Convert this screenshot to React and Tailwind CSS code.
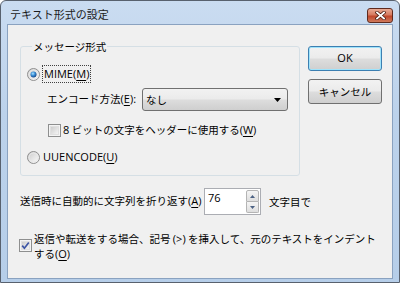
import React from 'react';

// Latin text uses a wider face than the CJK glyphs
const L = ({ children, u }) => (
  <span className={"font-['Open_Sans',sans-serif] text-[11px]" + (u ? ' underline underline-offset-2' : '')}>
    {children}
  </span>
);

const Key = ({ k }) => (
  <L>
    (<span className="underline underline-offset-2">{k}</span>)
  </L>
);

function Radio({ checked }) {
  return (
    <svg width="13" height="13" viewBox="0 0 13 13" className="shrink-0">
      <defs>
        <linearGradient id={checked ? 'rbg1' : 'rbg0'} x1="0" y1="0" x2="1" y2="1">
          <stop offset="0" stopColor="#c9c9c9" />
          <stop offset="1" stopColor="#ffffff" />
        </linearGradient>
        <radialGradient id="rdot" cx="40%" cy="35%" r="65%">
          <stop offset="0" stopColor="#a9e2ff" />
          <stop offset="0.5" stopColor="#3b8fd6" />
          <stop offset="1" stopColor="#16478a" />
        </radialGradient>
      </defs>
      <circle cx="6.5" cy="6.5" r="6" fill={`url(#${checked ? 'rbg1' : 'rbg0'})`} stroke="#8f8f8f" />
      <circle cx="6.5" cy="6.5" r="4.5" fill="none" stroke="#e9e9e9" />
      {checked && <circle cx="6.5" cy="6.5" r="3" fill="url(#rdot)" />}
    </svg>
  );
}

function Check({ checked }) {
  return (
    <svg width="13" height="13" viewBox="0 0 13 13" className="shrink-0">
      <defs>
        <linearGradient id="cbg" x1="0" y1="0" x2="1" y2="1">
          <stop offset="0" stopColor="#cbcbcb" />
          <stop offset="1" stopColor="#f6f6f6" />
        </linearGradient>
      </defs>
      <rect x="0.5" y="0.5" width="12" height="12" fill="#f4f4f4" stroke="#8e8f8f" />
      <rect x="2.5" y="2.5" width="8" height="8" fill="url(#cbg)" stroke="#e0e0e0" />
      {checked && (
        <path d="M3.2 6.6 L5.4 9.2 L9.8 3.4" fill="none" stroke="#3d55a5" strokeWidth="1.7" />
      )}
    </svg>
  );
}

const btn =
  "w-[74px] h-[25px] rounded-[3px] flex items-center justify-center text-[10.5px] text-black bg-[linear-gradient(180deg,#f2f2f2_0%,#ebebeb_48%,#dddddd_52%,#cfcfcf_100%)]";

export default function App() {
  return (
    <div className="w-[400px] h-[283px] flex flex-col overflow-hidden rounded-t-[6px] border border-[#58616e] bg-[linear-gradient(180deg,#cadcf1_0%,#bcd2eb_40%,#b6cee9_100%)] font-['Noto_Sans_CJK_JP',sans-serif] text-[10.5px] text-black">
      {/* Title bar */}
      <div className="h-[23px] flex items-center justify-between pl-[9px] pr-[6px]">
        <span className="mt-[4px] text-[11px] text-[#1b1b1b]">テキスト形式の設定</span>
        <div className="mt-[6px] w-[26px] h-[15px] rounded-[3px] border border-[#5f2a1e] bg-[linear-gradient(180deg,#e9ab95_0%,#d67a5f_45%,#c0462a_55%,#cf7a5c_100%)] flex items-center justify-center">
          <svg width="11" height="9" viewBox="0 0 11 9">
            <path d="M2 1.5 L9 7.5 M9 1.5 L2 7.5" stroke="#4b1d12" strokeWidth="3.4" strokeLinecap="square" />
            <path d="M2 1.5 L9 7.5 M9 1.5 L2 7.5" stroke="#ffffff" strokeWidth="1.8" strokeLinecap="square" />
          </svg>
        </div>
      </div>

      {/* Client area */}
      <div className="flex-1 mx-[6px] mb-[3px] border border-[#8aa2c0] bg-[#f0f0f0] flex flex-col">
        <div className="flex items-start pl-[12px] mt-[14px]">
          <fieldset className="w-[280px] border border-[#d5dfe5] rounded-[3px] pl-[6px] pb-[9px]">
            <legend className="ml-[5px] px-[1px] leading-[15px]">メッセージ形式</legend>
            <div className="mt-[11px] h-[18px] flex items-center">
              <Radio checked />
              <span className="ml-[2px] h-[18px] px-[1px] flex items-center border border-dotted border-[#404040]">
                <L>MIME</L>
                <Key k="M" />
              </span>
            </div>
            <div className="mt-[5px] flex items-center h-[23px] pl-[20px]">
              <span className="w-[95px]">
                エンコード方法<Key k="E" />
                <L>:</L>
              </span>
              <div className="w-[146px] h-[23px] rounded-[3px] border border-[#707070] bg-[linear-gradient(180deg,#f2f2f2_0%,#ebebeb_48%,#dddddd_52%,#cfcfcf_100%)] flex items-center justify-between pl-[3px] pr-[6px]">
                <span>なし</span>
                <svg width="7" height="4" viewBox="0 0 7 4">
                  <path d="M0 0 H7 L3.5 4 Z" fill="#000" />
                </svg>
              </div>
            </div>
            <div className="mt-[11px] h-[16px] flex items-center pl-[21px]">
              <Check />
              <span className="ml-[2px]">
                <L>8</L> ビットの文字をヘッダーに使用する<Key k="W" />
              </span>
            </div>
            <div className="mt-[10px] h-[18px] flex items-center">
              <Radio />
              <span className="ml-[3px]">
                <L>UUENCODE</L>
                <Key k="U" />
              </span>
            </div>
          </fieldset>

          <div className="ml-[8px] mt-[7px] flex flex-col gap-[8px]">
            <div className={btn + " border border-[#3c7fb1] shadow-[inset_0_0_0_1px_#9fe3fb]"}>
              <L>OK</L>
            </div>
            <div className={btn + " border border-[#707070]"}>キャンセル</div>
          </div>
        </div>

        <div className="mt-[12px] flex items-center pl-[12px]">
          <span className="w-[184px]">
            送信時に自動的に文字列を折り返す<Key k="A" />
          </span>
          <div className="w-[57px] h-[27px] flex border border-[#abadb3] bg-white">
            <span className="flex-1 pl-[3px] pt-[1px]">
              <L>76</L>
            </span>
            <div className="w-[13px] my-[1px] mr-[1px] flex flex-col">
              <div className="flex-1 border border-[#b4b4b4] rounded-t-[2px] bg-[linear-gradient(180deg,#f5f5f5,#dedede)] flex items-center justify-center">
                <svg width="5" height="3" viewBox="0 0 5 3">
                  <path d="M0 3 H5 L2.5 0 Z" fill="#4c6284" />
                </svg>
              </div>
              <div className="flex-1 border border-t-0 border-[#b4b4b4] rounded-b-[2px] bg-[linear-gradient(180deg,#f5f5f5,#dedede)] flex items-center justify-center">
                <svg width="5" height="3" viewBox="0 0 5 3">
                  <path d="M0 0 H5 L2.5 3 Z" fill="#4c6284" />
                </svg>
              </div>
            </div>
          </div>
          <span className="ml-[8px]">文字目で</span>
        </div>

        <div className="mt-[16px] flex items-start pl-[11px]">
          <div className="mt-[8px]">
            <Check checked />
          </div>
          <span className="ml-[2px] leading-[15px]">
            返信や転送をする場合、記号 <L>(&gt;)</L> を挿入して、元のテキストをインデント
            <br />
            する<Key k="O" />
          </span>
        </div>
      </div>
    </div>
  );
}
